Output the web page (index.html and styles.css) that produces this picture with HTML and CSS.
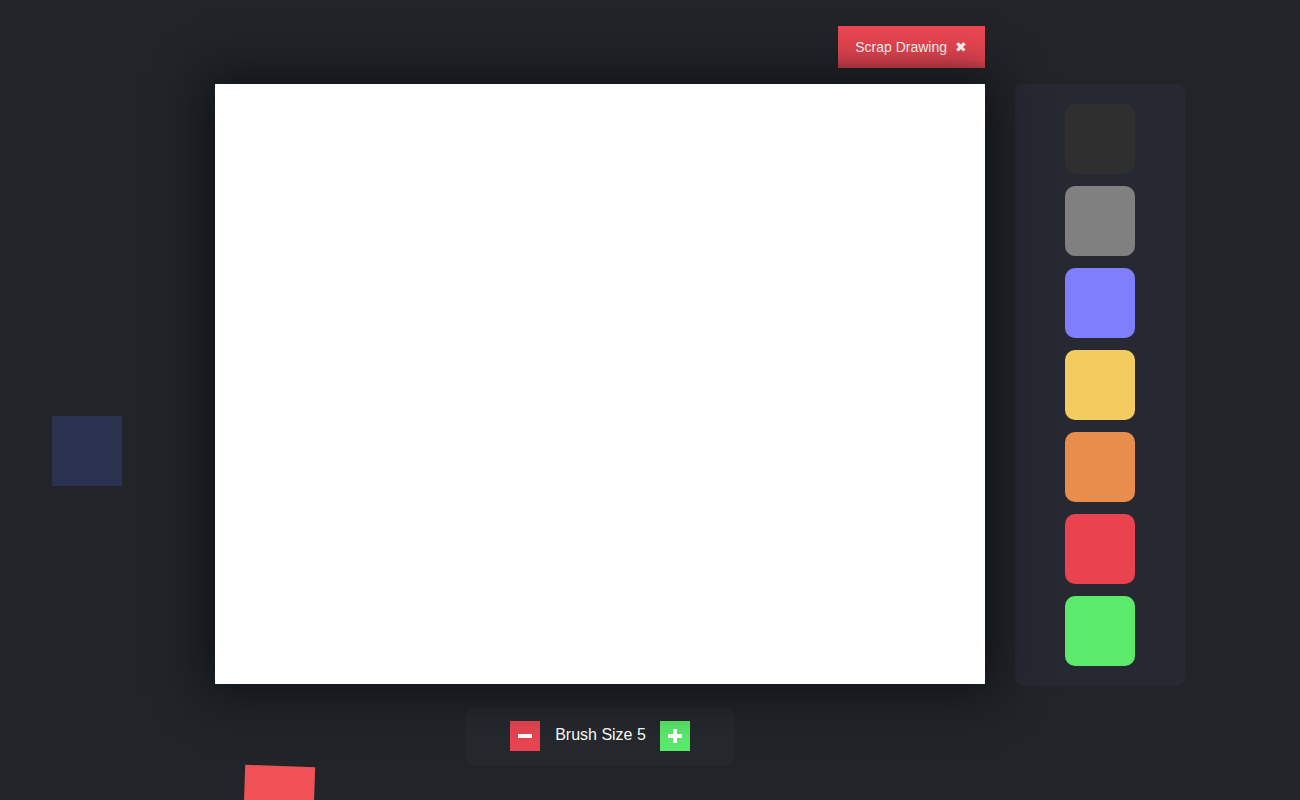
FILE: index.html
```html
<!DOCTYPE html>
<html>
<head>
<meta charset="utf-8">
<link rel="stylesheet" href="styles.css">
</head>
<body>
<div class="shape shape-blue"></div>
<div class="shape shape-red"></div>
<div class="app">
  <div class="board">
    <div class="board-top">
      <button class="scrap">Scrap Drawing <span class="x">&#10006;</span></button>
    </div>
    <div class="canvas"></div>
    <div class="brush">
      <button class="bbtn minus"><svg width="14" height="14" viewBox="0 0 14 14"><rect x="0" y="5" width="14" height="4" fill="#fff"/></svg></button>
      <span class="blabel">Brush Size 5</span>
      <button class="bbtn plus"><svg width="14" height="14" viewBox="0 0 14 14"><rect x="0" y="5" width="14" height="4" fill="#fff"/><rect x="5" y="0" width="4" height="14" fill="#fff"/></svg></button>
    </div>
  </div>
  <div class="palette">
    <div class="sw" style="background:#2f2f2f"></div>
    <div class="sw" style="background:#808080"></div>
    <div class="sw" style="background:#7f7ffd"></div>
    <div class="sw" style="background:#f3cc5f"></div>
    <div class="sw" style="background:#e88d4c"></div>
    <div class="sw" style="background:#e94350"></div>
    <div class="sw" style="background:#5bea6b"></div>
  </div>
</div>
</body>
</html>
```

FILE: styles.css
```css
html, body {
  margin: 0;
  padding: 0;
  height: 100%;
  overflow: hidden;
}
body {
  background: #212428;
  font-family: "Liberation Sans", Arial, sans-serif;
  position: relative;
}
.app {
  display: flex;
  align-items: flex-start;
  gap: 30px;
  padding: 26px 0 0 215px;
}
.board {
  display: flex;
  flex-direction: column;
  align-items: center;
  width: 770px;
}
.board-top {
  align-self: stretch;
  display: flex;
  justify-content: flex-end;
  height: 42px;
  margin-bottom: 16px;
}
.scrap {
  border: none;
  height: 42px;
  width: 147px;
  padding: 0 1px 0 0;
  background: linear-gradient(#ec4753 0%, #ea4652 80%, #d83f4a 100%);
  color: #fff;
  font-family: "Liberation Sans", Arial, sans-serif;
  font-size: 14px;
  display: flex;
  align-items: center;
  justify-content: center;
  gap: 8px;
}
.scrap .x {
  font-size: 14px;
  font-family: "DejaVu Sans", sans-serif;
}
.canvas {
  position: relative;
  z-index: 2;
  width: 770px;
  height: 600px;
  background: #fff;
  box-shadow: 0 0 45px 10px rgba(10, 12, 16, 0.72);
}
.brush {
  margin-top: 23px;
  width: 270px;
  height: 58px;
  background: #25282d;
  border-radius: 10px;
  display: flex;
  align-items: center;
  justify-content: center;
}
.bbtn {
  width: 30px;
  height: 30px;
  border: none;
  padding: 0;
  display: flex;
  align-items: center;
  justify-content: center;
}
.minus { background: #e94552; }
.plus { background: #5bea6b; }
.blabel {
  color: #fff;
  font-size: 16px;
  margin: 0 14px 0 15px;
  line-height: 28px;
  padding-bottom: 2px;
}
.palette {
  margin-top: 58px;
  width: 70px;
  padding: 20px 50px;
  background: #262932;
  border-radius: 8px;
  display: flex;
  flex-direction: column;
  gap: 12px;
}
.sw {
  width: 70px;
  height: 70px;
  border-radius: 10px;
}
.shape {
  position: absolute;
  width: 70px;
  height: 70px;
}
.shape-blue {
  left: 52px;
  top: 416px;
  background: #2b3250;
}
.shape-red {
  left: 244px;
  top: 766px;
  background: #f05157;
  transform: rotate(2deg);
}
```
